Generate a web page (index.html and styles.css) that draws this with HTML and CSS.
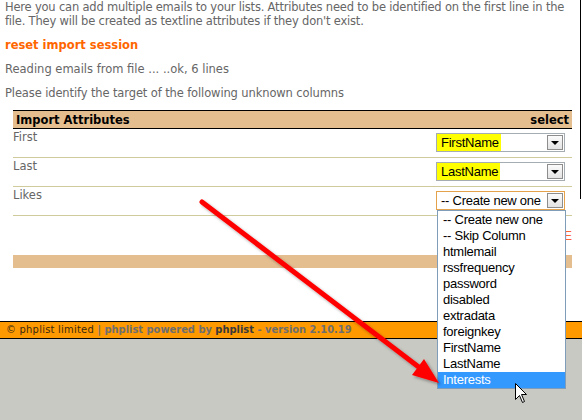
FILE: index.html
```html
<!DOCTYPE html>
<html>
<head>
<meta charset="utf-8">
<title>phplist import</title>
<link rel="stylesheet" href="styles.css">
</head>
<body>
<div class="page">
  <div class="content">
    <p class="intro">Here you can add multiple emails to your lists. Attributes need to be identified on the first line in the file. They will be created as textline attributes if they don't exist.</p>
    <p><a class="reset" href="#">reset import session</a></p>
    <p>Reading emails from file ... ..ok, 6 lines</p>
    <p class="note">Please identify the target of the following unknown columns</p>
    <div class="attrs">
      <div class="attrs-head"><span>Import Attributes</span><span>select</span></div>
      <div class="attr-row">
        <span class="attr-label">First</span>
        <div class="combo"><span class="combo-value hl">FirstName</span><span class="combo-btn"></span></div>
      </div>
      <div class="attr-row">
        <span class="attr-label">Last</span>
        <div class="combo"><span class="combo-value hl">LastName</span><span class="combo-btn"></span></div>
      </div>
      <div class="attr-row">
        <span class="attr-label">Likes</span>
        <div class="combo focus"><span class="combo-value">-- Create new one</span><span class="combo-btn"></span></div>
      </div>
      <div class="attr-submit"><span class="submit">E</span></div>
      <div class="attrs-foot"></div>
    </div>
  </div>
</div>
<div class="footer"><span class="copy">&copy; phplist limited</span> | phplist powered by <span class="pl">phplist</span> - version 2.10.19</div>

<ul class="dropdown">
  <li>-- Create new one</li>
  <li>-- Skip Column</li>
  <li>htmlemail</li>
  <li>rssfrequency</li>
  <li>password</li>
  <li>disabled</li>
  <li>extradata</li>
  <li>foreignkey</li>
  <li>FirstName</li>
  <li>LastName</li>
  <li class="sel">Interests</li>
</ul>

<svg class="arrow" width="582" height="420" viewBox="0 0 582 420">
  <defs>
    <filter id="sh" x="-10%" y="-10%" width="130%" height="130%">
      <feDropShadow dx="2" dy="2" stdDeviation="1.5" flood-color="#000" flood-opacity="0.35"/>
    </filter>
  </defs>
  <g filter="url(#sh)">
    <line x1="202" y1="202" x2="420" y2="368" stroke="#ff0000" stroke-width="5" stroke-linecap="round"/>
    <polygon points="439,383 412,375 424,359" fill="#ff0000"/>
  </g>
</svg>

<svg class="cursor" width="13" height="21" viewBox="0 0 13 21">
  <path d="M0.5 0.5 L0.5 16.5 L4.5 12.5 L7.5 19.5 L9.5 18.5 L6.5 11.5 L11.5 11.5 Z" fill="#fff" stroke="#000" stroke-width="1"/>
</svg>
</body>
</html>
```

FILE: styles.css
```css
html, body {
  margin: 0;
  padding: 0;
}

body {
  position: relative;
  width: 582px;
  height: 420px;
  overflow: hidden;
  background: #c8c9c3;
  font-family: "DejaVu Sans", Verdana, sans-serif;
  font-size: 11.5px;
  color: #666;
}

.page {
  height: 321px;
  background: #fff linear-gradient(#000, #000) no-repeat 580px 0 / 1px 199px;
}

.content {
  padding: 0 0 0 5px;
}

.content p {
  margin: 0 0 10px;
  line-height: 14px;
}

.content .intro {
  letter-spacing: -0.2px;
}

.content .note {
  letter-spacing: -0.12px;
}

.reset {
  color: #ff6600;
  font-weight: bold;
  text-decoration: none;
}

.attrs {
  margin-left: 8px;
  width: 559px;
}

.attrs-head {
  display: flex;
  justify-content: space-between;
  background: #e5be90;
  border-top: 1px solid #000;
  border-bottom: 1px solid #000;
  padding: 1px 3px 0;
  line-height: 16px;
  font-weight: bold;
  color: #000;
}

.attr-row {
  display: flex;
  justify-content: space-between;
  align-items: flex-start;
  height: 28px;
  border-bottom: 1px solid #cfcb9c;
}

.attr-label {
  line-height: 14px;
  padding-top: 1px;
}

.combo {
  box-sizing: border-box;
  width: 129px;
  height: 19px;
  margin: 4px 7px 0 0;
  border: 1px solid #a5acb2;
  background: #fff;
  display: flex;
  justify-content: space-between;
  font-family: "Liberation Sans", Arial, sans-serif;
  font-size: 13px;
  letter-spacing: -0.25px;
  color: #000;
  white-space: nowrap;
  overflow: hidden;
}

.combo.focus {
  border-color: #e5a24c;
}

.combo-value {
  line-height: 17px;
  padding: 0 2px 0 4px;
}

.combo-value.hl {
  background: #ffff00;
}

.combo-btn {
  position: relative;
  flex: none;
  box-sizing: border-box;
  width: 16px;
  height: 15px;
  margin: 1px 1px 0 0;
  border: 1px solid #8d8d8d;
  background: linear-gradient(#fbfbfb, #e3e3e3);
}

.combo-btn::after {
  content: "";
  position: absolute;
  left: 3px;
  top: 5px;
  border-left: 4px solid transparent;
  border-right: 4px solid transparent;
  border-top: 4px solid #000;
}

.attr-submit {
  display: flex;
  justify-content: flex-end;
  height: 39px;
}

.submit {
  margin-top: 13px;
  line-height: 14px;
  font-family: "Liberation Sans", Arial, sans-serif;
  font-size: 12px;
  color: #ff6633;
}

.attrs-foot {
  height: 13px;
  background: #e5be90;
}

.footer {
  border-top: 1px solid #000;
  border-bottom: 1px solid #000;
  background: #ff9900;
  line-height: 16px;
  padding: 0 6px;
  font-family: "DejaVu Sans Condensed", "DejaVu Sans", sans-serif;
  font-size: 11px;
  font-weight: bold;
  color: #6e6e6e;
  white-space: nowrap;
}

.footer .copy {
  font-weight: normal;
  letter-spacing: 0.25px;
  color: #3a2a10;
}

.footer .pl {
  color: #3a3a3a;
}

.dropdown {
  position: absolute;
  left: 437px;
  top: 210px;
  box-sizing: border-box;
  width: 129px;
  margin: 0;
  padding: 1px 0 0;
  list-style: none;
  border: 1px solid #7f9db9;
  background: #fff;
  font-family: "Liberation Sans", Arial, sans-serif;
  font-size: 13px;
  letter-spacing: -0.25px;
  color: #000;
}

.dropdown li {
  height: 16px;
  line-height: 16px;
  padding-left: 5px;
}

.dropdown li.sel {
  background: #3399ff;
  color: #fff;
}

.arrow {
  position: absolute;
  left: 0;
  top: 0;
  pointer-events: none;
}

.cursor {
  position: absolute;
  left: 515px;
  top: 383px;
}
```
